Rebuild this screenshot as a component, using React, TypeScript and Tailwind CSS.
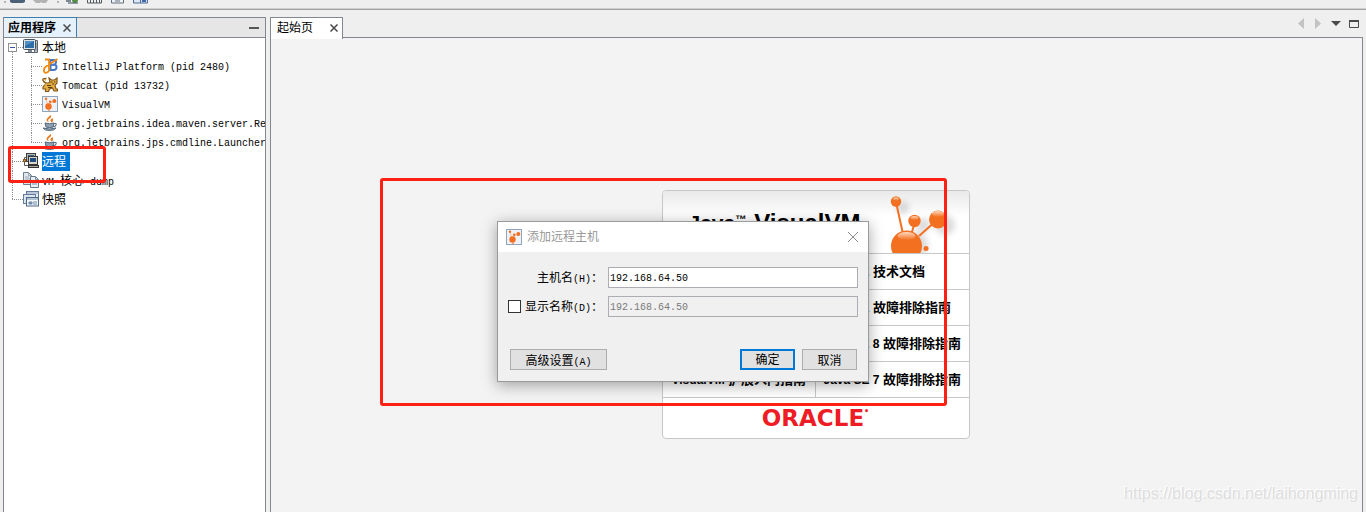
import type { ReactNode } from "react";

const SONG = "font-['Liberation_Mono','Noto_Sans_CJK_SC',monospace]";

function Latin({ children }: { children: ReactNode }) {
  return <span className="text-[10px]">{children}</span>;
}

function VisualVmIcon() {
  return (
    <svg width="16" height="16" viewBox="0 0 16 16" className="shrink-0">
      <rect x="0.5" y="0.5" width="15" height="15" fill="#eef2f6" stroke="#8fa5ba" />
      <path d="M6 10 4 3M7 8l5-3" stroke="#f7a06c" strokeWidth="0.6" />
      <circle cx="6.5" cy="10.5" r="3.2" fill="#f36f21" />
      <circle cx="4" cy="2.8" r="1.2" fill="#f36f21" />
      <circle cx="8.2" cy="5.8" r="1.3" fill="#f36f21" />
      <circle cx="12.3" cy="5" r="2" fill="#f36f21" />
      <circle cx="7" cy="14.4" r="0.7" fill="#f36f21" />
    </svg>
  );
}

function LocalIcon() {
  return (
    <svg width="16" height="16" viewBox="0 0 16 16" className="shrink-0">
      <path d="M11.5 1.5h3v12h-3z" fill="#c9ced2" stroke="#5c646d" />
      <path d="M13 4v8" stroke="#7a838b" />
      <rect x="0.5" y="0.5" width="12" height="10" rx="1" fill="#dfe4e8" stroke="#47525e" />
      <rect x="2" y="2" width="9" height="7" fill="#2f6ea8" />
      <path d="M2 2h9L2 7z" fill="#5590c4" />
      <path d="M5 11h4v2H5z" fill="#7d868f" />
      <path d="M2 13.5h10" stroke="#56606a" />
    </svg>
  );
}

function IntellijIcon() {
  return (
    <svg width="16" height="16" viewBox="0 0 16 16" className="shrink-0">
      <path d="M8.500 2H12q2 0 2 2t-1.500 2.500q2 0.500 2 2.700T12 12H8.500z" fill="none" stroke="#4676c8" strokeWidth="2" />
      <path d="M9 6.800h4" stroke="#4676c8" strokeWidth="2" />
      <path d="M15.500 1 4 8.500Q1.500 10.500 2 13t3 1.500T7 11V1.500H3" fill="none" stroke="#f08a14" strokeWidth="1.800" />
    </svg>
  );
}

function TomcatIcon() {
  return (
    <svg width="16" height="16" viewBox="0 0 16 16" className="shrink-0">
      <path
        d="M4.500 1.500Q0 1 1 3.500t4 2.500l3-0.500-1-4.500 2.500 2h3L15 1v5l-2 2.500 1 3.500h1.500v2H12l-1.500-3-3 1-1 2.500H3.500V12H1v-2l2-2.500"
        fill="#e4ae42"
        stroke="#85571a"
        strokeWidth="1.200"
      />
      <path d="M9 5h1.500M12 5h1.500M10 7h2M5 8.500h4M6 10.500h4" stroke="#5d3d0f" />
      <path d="M2 2.800q0.500 2 4 2" fill="none" stroke="#fff" />
    </svg>
  );
}

function JavaIcon() {
  return (
    <svg width="16" height="16" viewBox="0 0 16 16" className="shrink-0">
      <path d="M8.500 0q1.500 2-1 3.500T7 7.500Q3 5.500 5.500 3T8.500 0M10.500 3q-3.500 2-1 4.500 2.500-1 1-4.500" fill="#e9791c" />
      <path d="M3 8q4.500 1.500 9 0l-1 4q-3.500 1.500-7 0z" fill="#8fa1b2" stroke="#52687b" />
      <path d="M12 8.500q3-0.500 2 1.500t-3 1.500" fill="none" stroke="#5c7286" strokeWidth="1.200" />
      <path d="M1 13q6.500 2 13 0-1.500 2.500-6.500 2.500T1 13z" fill="#9dadbb" stroke="#52687b" />
    </svg>
  );
}

function RemoteIcon() {
  return (
    <svg width="16" height="16" viewBox="0 0 16 16" className="shrink-0">
      <rect x="3.500" y="0.500" width="9" height="8" fill="#b9b9ae" stroke="#3d4043" />
      <rect x="5" y="2" width="6" height="4" fill="#38618f" />
      <rect x="5.500" y="3.500" width="9" height="8" fill="#d9d8cb" stroke="#333" />
      <rect x="7" y="5" width="6" height="4" fill="#1f4c80" />
      <rect x="5.500" y="12.500" width="10" height="2" fill="#aaa99c" stroke="#333" />
      <path d="M4 4.500H1.500v8H5" fill="none" stroke="#555" />
      <rect x="0.500" y="6.500" width="2" height="2" fill="#e0a04b" stroke="#8d5a1c" />
    </svg>
  );
}

function DumpIcon() {
  return (
    <svg width="16" height="16" viewBox="0 0 16 16" className="shrink-0">
      <path d="M0.500 0.500h5l3 3v9h-8z" fill="#dfe6ec" stroke="#71808f" />
      <path d="M5.500 0.500v3h3M2 5h4M2 7h5M2 9h5" fill="none" stroke="#9baab9" />
      <path d="M7.500 4.500h5l3 3v8h-8z" fill="#e9eef3" stroke="#64788c" />
      <path d="M12.500 4.500v3h3M9 10h5M9 12h5" fill="none" stroke="#7992aa" />
    </svg>
  );
}

function SnapshotIcon() {
  return (
    <svg width="16" height="16" viewBox="0 0 16 16" className="shrink-0">
      <rect x="3.500" y="0.500" width="12" height="10" fill="#e8eef5" stroke="#647b98" />
      <path d="M4 2h11" stroke="#8aa0bb" />
      <rect x="0.500" y="3.500" width="12" height="9" fill="#dbe5ef" stroke="#647b98" />
      <rect x="3.500" y="6.500" width="12" height="8.500" fill="#f5f8fb" stroke="#4d6787" />
      <path d="M4 8h11" stroke="#7890ad" />
      <path d="M6 11h3v2H6zM10 11h4M10 13h4" fill="#7089a8" stroke="#7089a8" />
    </svg>
  );
}

type ConnectorProps = {
  level: number;
  first?: boolean;
  last?: boolean;
  endChild?: boolean;
};

function Connector({ level, first, last, endChild }: ConnectorProps) {
  const width = level === 0 ? 19 : 38;
  const x = level === 0 ? 8 : 27;

  return (
    <svg width={width} height="19" className="shrink-0" shapeRendering="crispEdges">
      <g stroke="#8f8f8f" strokeDasharray="1 1">
        <path d={first ? "M8.500 14V19" : last ? "M8.500 0V10" : "M8.500 0V19"} />
        <path d={`M${x} 9.500H${width}`} />
        {level === 1 && <path d={endChild ? "M27.500 0V10" : "M27.500 0V19"} />}
      </g>
      {first && (
        <g>
          <rect x="4.500" y="5.500" width="8" height="8" fill="#fff" stroke="#919191" />
          <path d="M6 9.500h5" stroke="#3b55a5" />
        </g>
      )}
    </svg>
  );
}

type TreeNode = {
  level: number;
  icon: ReactNode;
  label: ReactNode;
  selected?: boolean;
  endChild?: boolean;
};

const nodes: TreeNode[] = [
  { level: 0, icon: <LocalIcon />, label: "本地" },
  { level: 1, icon: <IntellijIcon />, label: <Latin>IntelliJ Platform (pid 2480)</Latin> },
  { level: 1, icon: <TomcatIcon />, label: <Latin>Tomcat (pid 13732)</Latin> },
  { level: 1, icon: <VisualVmIcon />, label: <Latin>VisualVM</Latin> },
  { level: 1, icon: <JavaIcon />, label: <Latin>org.jetbrains.idea.maven.server.Re</Latin> },
  { level: 1, icon: <JavaIcon />, label: <Latin>org.jetbrains.jps.cmdline.Launcher</Latin>, endChild: true },
  { level: 0, icon: <RemoteIcon />, label: "远程", selected: true },
  { level: 0, icon: <DumpIcon />, label: <><Latin>VM </Latin>核心<Latin> dump</Latin></> },
  { level: 0, icon: <SnapshotIcon />, label: "快照" },
];

function CloseMark() {
  return (
    <svg width="8" height="8" viewBox="0 0 8 8">
      <path d="M0.500 0.500l7 7M7.500 0.500l-7 7" stroke="#4a4a4a" strokeWidth="1.500" />
    </svg>
  );
}

function Toolbar() {
  return (
    <header className="h-[10px] shrink-0 overflow-hidden border-b border-[#a0a0a0] shadow-[inset_0_-1px_0_#cfcfcf]">
      <svg width="160" height="5">
        <path d="M4 1h2v2H4zM57 1h2v2h-2z" fill="#b5b5b5" />
        <path d="M10 0h15v2l-2 1H12l-2-1z" fill="#4b6177" />
        <path d="M33 0h15l-2 3h-4l-1-1-1 1h-4z" fill="#b3b3b3" />
        <path d="M66 0h5v2h-5z" fill="#7a8793" />
        <path d="M72 0h6q0 3-3 3t-3-3" fill="#559044" />
        <path d="M68 3h10" stroke="#3d4b59" />
        <path d="M87.500 0v3h14V0M90.500 0v3M93.500 0v3M96.500 0v3M99.500 0v3" fill="none" stroke="#545b62" />
        <path d="M111.500 0v3h12V0M115 1h5" fill="#eef2f6" stroke="#63717f" />
        <path d="M133.500 0v3h14V0M140.500 0v3" fill="#dce6f2" stroke="#4f6b96" />
        <path d="M142 1h4" stroke="#3f69ad" strokeWidth="2" />
      </svg>
    </header>
  );
}

function ApplicationsPanel() {
  return (
    <aside className="relative flex w-[263px] shrink-0 flex-col border border-b-0 border-[#828790] bg-white">
      <div className="flex h-5 shrink-0 items-stretch border-b border-[#828790] bg-[#e6e6e6]">
        <div className="-mt-px flex w-[73px] items-center justify-between border-t border-r border-[#3c7fb1] bg-[#e5f1fb] pr-[5px] pl-1">
          <span className="pt-[2px] font-bold">应用程序</span>
          <button type="button" aria-label="关闭应用程序">
            <CloseMark />
          </button>
        </div>
        <button type="button" aria-label="最小化" className="ml-auto flex w-5 items-center">
          <span className="ml-1 h-0.5 w-[10px] bg-[#555]" />
        </button>
      </div>
      <ul className="overflow-hidden">
        {nodes.map((node, index) => (
          <li key={index} className="flex h-[19px] items-start whitespace-pre">
            <Connector
              level={node.level}
              first={index === 0}
              last={index === nodes.length - 1}
              endChild={node.endChild}
            />
            <span className="shrink-0 pt-px">{node.icon}</span>
            <span
              className={
                node.selected
                  ? "ml-[3px] h-[19px] w-7 bg-[#0078d7] leading-[23px] text-white"
                  : node.level === 0
                    ? "ml-[3px] leading-[23px]"
                    : "ml-1 leading-[21px]"
              }
            >
              {node.label}
            </span>
          </li>
        ))}
      </ul>
      <div className="pointer-events-none absolute top-[128px] left-1 h-[37px] w-[98px] rounded-[3px] border-3 border-[#ff2014]" />
    </aside>
  );
}

function MoleculeArt() {
  return (
    <svg width="80" height="62" viewBox="0 0 80 62" className="mr-2">
      <defs>
        <linearGradient id="shine" x1="0" y1="0" x2="0" y2="1">
          <stop offset="0" stopColor="#ffd9bd" />
          <stop offset="1" stopColor="#f37021" />
        </linearGradient>
        <filter id="soft" x="-30%" y="-30%" width="160%" height="160%">
          <feGaussianBlur stdDeviation="3" />
        </filter>
      </defs>
      <g fill="#000" opacity="0.14" filter="url(#soft)">
        <circle cx="22" cy="17" r="6" />
        <circle cx="42" cy="34" r="7" />
        <circle cx="64" cy="34" r="10" />
        <circle cx="34" cy="54" r="13" />
      </g>
      <path d="M15 11l7 32M34 31l-4 13M56 29 38 45" stroke="#f37021" strokeWidth="2" />
      <g fill="#f37021">
        <circle cx="15" cy="10.500" r="5.200" />
        <circle cx="33.500" cy="30" r="6.200" />
        <circle cx="57" cy="28.500" r="9" />
        <circle cx="25.500" cy="55" r="15.500" />
        <circle cx="45" cy="57.500" r="2.500" />
      </g>
      <g fill="url(#shine)">
        <ellipse cx="15" cy="8" rx="3" ry="1.800" />
        <ellipse cx="33.500" cy="27" rx="4" ry="2" />
        <ellipse cx="57" cy="23" rx="6" ry="3" />
        <ellipse cx="25.500" cy="45" rx="9" ry="4" />
      </g>
    </svg>
  );
}

const links = [
  ["", "Java SE 技术文档"],
  ["", "Java SE 故障排除指南"],
  ["", "Java SE 8 故障排除指南"],
  ["VisualVM 扩展入门指南", "Java SE 7 故障排除指南"],
];

function LinkLabel({ text }: { text: string }) {
  const cut = text.lastIndexOf(" ") + 1;
  return (
    <a href="#" className="whitespace-pre">
      {text.slice(0, cut)}
      <span className="text-[13px]">{text.slice(cut)}</span>
    </a>
  );
}

function StartCard() {
  return (
    <section className="w-[308px] overflow-hidden rounded-[4px] border border-[#c8c8c8] bg-white font-['Liberation_Sans','Noto_Sans_CJK_SC',sans-serif]">
      <div className="flex h-[62px] justify-between bg-linear-to-b from-[#e9e9e9] to-white to-40% pl-[26px]">
        <h1 className="mt-[18px] flex leading-7 font-bold whitespace-nowrap">
          <span className="text-[21px]">Java</span>
          <span className="text-[11px] leading-5">™</span>
          <span className="ml-2 text-[24px]">VisualVM</span>
        </h1>
        <MoleculeArt />
      </div>
      {links.map(([left, right]) => (
        <div key={right} className="grid h-9 grid-cols-2 border-t border-[#c8c8c8] text-[12px] font-bold whitespace-nowrap">
          <div className="flex items-center border-r border-[#c8c8c8] pl-[9px]">
            {left && <LinkLabel text={left} />}
          </div>
          <div className="flex items-center pl-2">
            <LinkLabel text={right} />
          </div>
        </div>
      ))}
      <div className="flex h-[41px] items-center justify-center border-t border-[#c8c8c8] font-['DejaVu_Sans',sans-serif] text-[23px] font-bold text-[#ee1c25]">
        ORACLE
        <span className="mb-3 text-[8px] leading-none">•</span>
      </div>
    </section>
  );
}

function StartPage() {
  return (
    <main className="flex min-w-0 flex-1 flex-col">
      <div className="flex h-[21px] shrink-0">
        <div className="z-10 -mb-px flex w-[73px] justify-between border border-b-0 border-[#828790] bg-white pr-1 pl-[6px]">
          <span className="leading-[22px]">起始页</span>
          <button type="button" aria-label="关闭起始页" className="h-[19px]">
            <CloseMark />
          </button>
        </div>
        <div className="ml-auto pr-[2px]">
          <svg width="64" height="14">
            <path d="M7 1v11L1 6.500zM18 1v11l6-5.500z" fill="#c3c3c3" />
            <path d="M34 4h10l-5 5z" fill="#4a4a4a" />
            <path d="M52.500 4v6.500h9V4" fill="none" stroke="#4a4a4a" />
            <path d="M52 4h10" stroke="#4a4a4a" strokeWidth="2" />
          </svg>
        </div>
      </div>
      <div className="-mt-px flex min-h-0 flex-1 flex-col items-center border border-b-0 border-[#828790] bg-[#f3f3f3] pt-[152px] pr-[2px]">
        <StartCard />
      </div>
    </main>
  );
}

function AddHostDialog() {
  return (
    <div
      role="dialog"
      aria-labelledby="dialog-title"
      className="absolute top-[221px] left-1/2 w-[372px] -translate-x-1/2 border border-[#9b9b9b] bg-[#f0f0f0] shadow-[0_3px_14px_rgba(0,0,0,0.35)]"
    >
      <div className="flex h-[30px] items-center bg-white px-2">
        <VisualVmIcon />
        <h2 id="dialog-title" className="ml-[5px] pt-[2px] text-[#999]">添加远程主机</h2>
        <button type="button" aria-label="关闭" className="ml-auto pr-px">
          <svg width="12" height="12">
            <path d="M1 1l10 10M11 1 1 11" stroke="#8c8c8c" />
          </svg>
        </button>
      </div>
      <form className="pt-[15px] pr-[10px] pb-[11px] pl-[10px]">
        <div className="grid grid-cols-[95px_1fr] gap-x-[5px] gap-y-2">
          <label htmlFor="host" className="h-[21px] text-right leading-[25px]">
            主机名<Latin>(H)</Latin>：
          </label>
          <input
            id="host"
            defaultValue="192.168.64.50"
            className="h-[21px] w-full border border-[#abadb3] bg-white px-px pt-px text-[10px]"
          />
          <div className="flex h-[21px] items-center justify-between">
            <input id="use-name" type="checkbox" className="size-[13px] appearance-none border border-[#333] bg-white" />
            <label htmlFor="use-name" className="h-[21px] leading-[25px]">
              显示名称<Latin>(D)</Latin>：
            </label>
          </div>
          <input
            aria-label="显示名称"
            defaultValue="192.168.64.50"
            disabled
            className="h-[21px] w-full border border-[#abadb3] bg-[#f0f0f0] px-px pt-px text-[10px] text-[#7a7a7a]"
          />
        </div>
        <div className="mt-8 flex gap-[7px] pr-px pl-[2px]">
          <button type="button" className="mr-auto h-[21px] w-[97px] border border-[#adadad] bg-[#e1e1e1] pt-1 leading-[17px]">
            高级设置<Latin>(A)</Latin>
          </button>
          <button type="button" className="h-[21px] w-[55px] border-2 border-[#0078d7] bg-[#e1e1e1] pt-[3px] leading-[15px]">
            确定
          </button>
          <button type="button" className="h-[21px] w-[55px] border border-[#adadad] bg-[#e1e1e1] pt-1 leading-[17px]">
            取消
          </button>
        </div>
      </form>
    </div>
  );
}

export default function App() {
  return (
    <div className={`relative flex h-screen flex-col overflow-hidden bg-[#efefef] text-[12px] text-black ${SONG}`}>
      <Toolbar />
      <div className="flex min-h-0 flex-1 gap-1 pt-[7px] pr-[3px] pl-[3px]">
        <ApplicationsPanel />
        <StartPage />
      </div>
      <AddHostDialog />
      <div className="pointer-events-none absolute top-[178px] left-[380px] h-[228px] w-[567px] rounded-[3px] border-3 border-[#ff2014]" />
      <p className="pointer-events-none absolute right-2 bottom-2 font-['Liberation_Sans',sans-serif] text-[16px] leading-5 text-[#dedede] [text-shadow:-1px_-1px_0_#fff]">
        https://blog.csdn.net/laihongming
      </p>
    </div>
  );
}
